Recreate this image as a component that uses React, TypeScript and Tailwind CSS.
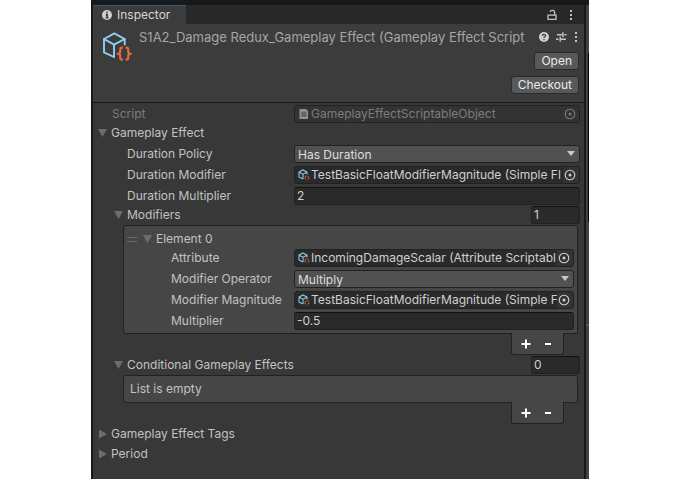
import { useId } from "react";
import type { ReactNode } from "react";

function AssetIcon({ className }: { className: string }) {
  return (
    <svg viewBox="0 0 30 30" className={className} fill="none" aria-hidden="true">
      <g stroke="#8fd0f2" strokeWidth="1.9" strokeLinejoin="round" strokeLinecap="round">
        <path d="M12 26 L2 21.3 V8 L12.3 2.4 L22.7 8 V13.5" />
        <path d="M2 8 L12 13.6 L22.7 8 M12 13.6 V26" />
      </g>
      <g stroke="#e8683c" strokeWidth="2.1" strokeLinejoin="round">
        <path d="M20.8 16.6 H20 Q18.2 16.6 18.2 18.4 V20.4 Q18.2 22.6 15.6 22.8 Q18.2 23 18.2 25.2 V26.8 Q18.2 28.6 20 28.6 H20.8" />
        <path d="M23.6 16.6 H24.4 Q26.2 16.6 26.2 18.4 V20.4 Q26.2 22.6 28.8 22.8 Q26.2 23 26.2 25.2 V26.8 Q26.2 28.6 24.4 28.6 H23.6" />
      </g>
    </svg>
  );
}

function SmallAssetIcon() {
  return (
    <svg viewBox="0 0 12 12" className="h-3 w-3 shrink-0" fill="none" aria-hidden="true">
      <path d="M4.8 10 L1 8 V3.2 L5 1 L9 3.2 V5.5 M1 3.2 L5 5.2 L9 3.2 M5 5.2 V10" stroke="#8cc4e0" strokeWidth="1.1" />
      <path d="M8 6.8 L6.8 8.9 L8 11 M9.6 6.8 L11 8.9 L9.6 11" stroke="#d0694a" strokeWidth="1.1" strokeDasharray="1.5 .8" />
    </svg>
  );
}

function ScriptIcon() {
  return (
    <svg viewBox="0 0 12 12" className="h-3 w-3 shrink-0" aria-hidden="true">
      <path d="M1.5 1 H8 L10 3 V11 H1.5 Z" fill="#8d908e" />
      <path d="M4.6 3.5 V9 M7 3.5 V9 M3.2 5.2 H8.4 M3.2 7.4 H8.4" stroke="#4c6156" strokeWidth="1.2" />
    </svg>
  );
}

function Kebab() {
  return (
    <svg viewBox="0 0 4 12" className="h-3 w-1" fill="#c4c4c4" aria-hidden="true">
      <rect x="1" y="1" width="2" height="2" />
      <rect x="1" y="5" width="2" height="2" />
      <rect x="1" y="9" width="2" height="2" />
    </svg>
  );
}

function Triangle({ open }: { open: boolean }) {
  return (
    <svg viewBox="0 0 10 10" className="h-[10px] w-[10px] shrink-0" fill="#6c6c6c" aria-hidden="true">
      <path d={open ? "M0 1 H9 L4.5 9 Z" : "M1 .5 V9.5 L9 5 Z"} />
    </svg>
  );
}

function Foldout({ label, open = false }: { label: string; open?: boolean }) {
  return (
    <button type="button" aria-expanded={open} className="flex h-[18px] items-center gap-[3px] text-left">
      <Triangle open={open} />
      <span>{label}</span>
    </button>
  );
}

const box = "h-[18px] w-full min-w-0 rounded-[3px] border border-[#212121]";

function Row({ label, id, nested = false, children }: { label: string; id: string; nested?: boolean; children: ReactNode }) {
  return (
    <div className="flex h-[18px] items-center">
      <label htmlFor={id} className={nested ? "w-[123px] shrink-0" : "w-[167px] shrink-0"}>
        {label}
      </label>
      <div className="min-w-0 flex-1">{children}</div>
    </div>
  );
}

function ObjectField({ id, value, disabled = false }: { id: string; value: string; disabled?: boolean }) {
  return (
    <div className={`flex items-center ${box} ${disabled ? "bg-[#333] text-[#7c7c7c]" : "bg-[#2a2a2a] text-[#d0d0d0]"}`}>
      <div className="flex min-w-0 flex-1 items-center gap-px pl-[3px] whitespace-nowrap">
        {disabled ? <ScriptIcon /> : <SmallAssetIcon />}
        <span>{value}</span>
      </div>
      <button
        id={id}
        type="button"
        disabled={disabled}
        aria-label={`Select ${value}`}
        className={`flex h-4 w-4 shrink-0 items-center justify-end rounded-r-[2px] pr-[3px] ${disabled ? "" : "bg-[#333]"}`}
      >
        <svg viewBox="0 0 12 12" className="h-3 w-3 shrink-0" fill="none" stroke="currentColor" aria-hidden="true">
          <circle cx="6" cy="6" r="4.8" strokeWidth="1.1" />
          <circle cx="6" cy="6" r="1.5" fill="currentColor" stroke="none" />
        </svg>
      </button>
    </div>
  );
}

function SelectField({ id, value }: { id: string; value: string }) {
  return (
    <div className="relative">
      <select id={id} className={`block appearance-none bg-[#515151] pl-[3px] text-[#dedede] ${box}`}>
        <option>{value}</option>
      </select>
      <svg viewBox="0 0 8 5" className="pointer-events-none absolute top-[6px] right-[5px] h-[5px] w-2" fill="#c8c8c8" aria-hidden="true">
        <path d="M0 0 H8 L4 5 Z" />
      </svg>
    </div>
  );
}

function TextField({ id, value, label }: { id?: string; value: string; label?: string }) {
  return (
    <input
      id={id}
      aria-label={label}
      defaultValue={value}
      className={`block border-t-[#111] bg-[#2a2a2a] px-[2px] text-[#d0d0d0] ${box}`}
    />
  );
}

function ListFooter() {
  return (
    <div className="mr-4 -mt-px flex h-[22px] w-[53px] items-center justify-center gap-3 self-end rounded-b-[3px] border border-t-0 border-[#212121] bg-[#464646] pr-[2px] text-white">
      <button type="button" aria-label="Add element">
        <svg viewBox="0 0 10 10" className="h-[10px] w-[10px]" stroke="currentColor" strokeWidth="2" aria-hidden="true">
          <path d="M5 .5 V9.5 M.5 5 H9.5" />
        </svg>
      </button>
      <button type="button" aria-label="Remove element">
        <svg viewBox="0 0 10 10" className="h-[10px] w-[10px]" stroke="currentColor" strokeWidth="2" aria-hidden="true">
          <path d="M2 5 H8" />
        </svg>
      </button>
    </div>
  );
}

function ListHeader({ label, count }: { label: string; count: string }) {
  return (
    <div className="flex items-center justify-between pl-4">
      <Foldout label={label} open />
      <div className="w-[49px]">
        <TextField value={count} label={`${label} size`} />
      </div>
    </div>
  );
}

const listBox = "ml-[25px] mr-[2px] rounded-[3px] border border-[#212121] bg-[#464646]";
const headerButton = "h-[18px] rounded-[3px] border border-[#2b2b2b] bg-[#585858] px-[6px] leading-4 text-[#eaeaea]";

export default function App() {
  const uid = useId();
  return (
    <div className="flex min-h-screen bg-white px-[91px] font-['Inter','Liberation_Sans',sans-serif] text-[12px] leading-[18px] text-[#c2c2c2]">
      <main className="flex min-w-0 flex-1 flex-col border-x-2 border-t-[5px] border-[#191919] bg-[#383838]">
        <div className="flex h-[19px] items-stretch justify-between bg-[#282828]">
          <div className="flex w-[93px] items-center gap-[5px] border-t border-[#2c5d87] bg-[#3c3c3c] pl-[9px] text-[#d6d6d6]">
            <svg viewBox="0 0 10 10" className="h-[10px] w-[10px]" aria-hidden="true">
              <circle cx="5" cy="5" r="5" fill="#d0d0d0" />
              <path d="M5 1.6 V3.2 M3.8 4.4 H5.3 V7.8 M3.6 7.9 H6.6" stroke="#383838" strokeWidth="1.3" />
            </svg>
            <span>Inspector</span>
          </div>
          <div className="flex items-center gap-3 pr-[11px]">
            <button type="button" aria-label="Lock">
              <svg viewBox="0 0 10 12" className="h-3 w-[10px]" fill="none" stroke="#c4c4c4" strokeWidth="1.3" aria-hidden="true">
                <path d="M1 6.2 H9 V10.4 H1 Z M7.6 6 V3.4 Q7.6 1.4 5.6 1.4 H5 Q3.4 1.4 3.2 3" />
              </svg>
            </button>
            <button type="button" aria-label="Tab menu">
              <Kebab />
            </button>
          </div>
        </div>

        <header className="flex h-[79px] shrink-0 border-b border-[#191919] bg-[#3c3c3c] pt-1 pl-[9px]">
          <AssetIcon className="mt-[3px] h-[30px] w-[30px] shrink-0" />
          <div className="ml-[7px] flex min-w-0 flex-1 flex-col items-end pr-[5px]">
            <div className="flex w-full items-center">
              <h1 className="min-w-0 flex-1 text-[13px] whitespace-nowrap text-[#a6a6a6]">
                S1A2_Damage Redux_Gameplay Effect (Gameplay Effect Script
              </h1>
              <div className="flex items-center gap-[7px] pr-px">
                <button type="button" aria-label="Help">
                  <svg viewBox="0 0 10 10" className="h-[10px] w-[10px]" aria-hidden="true">
                    <circle cx="5" cy="5" r="5" fill="#cfcfcf" />
                    <path d="M3.4 3.9 Q3.4 2.3 5 2.3 Q6.6 2.3 6.6 3.8 Q6.6 4.6 5 5.4 V6.1 M5 6.9 V8.2" stroke="#3c3c3c" strokeWidth="1.2" fill="none" />
                  </svg>
                </button>
                <button type="button" aria-label="Presets">
                  <svg viewBox="0 0 11 10" className="h-[10px] w-[11px]" stroke="#c4c4c4" strokeWidth="1.4" aria-hidden="true">
                    <path d="M1 2.8 H7 M7 .3 V5.3 M8.5 2.8 H10.5 M0 7.2 H2.5 M4.2 4.7 V9.7 M4.2 7.2 H10" />
                  </svg>
                </button>
                <button type="button" aria-label="Component menu">
                  <Kebab />
                </button>
              </div>
            </div>
            <button type="button" className={`mt-[6px] ${headerButton}`}>
              Open
            </button>
            <button type="button" className={`mt-[6px] ${headerButton}`}>
              Checkout
            </button>
          </div>
        </header>

        <section className="flex flex-col pt-[2px] pr-1 pl-[5px]">
          <div className="flex h-[18px] items-center pl-[14px] text-[#7c7c7c]">
            <label htmlFor={`${uid}s`} className="w-[182px] shrink-0">
              Script
            </label>
            <ObjectField id={`${uid}s`} value="GameplayEffectScriptableObject" disabled />
          </div>
          <div className="mt-px flex">
            <Foldout label="Gameplay Effect" open />
          </div>
          <div className="mt-[3px] flex flex-col gap-[3px] pl-[29px]">
            <Row label="Duration Policy" id={`${uid}p`}>
              <SelectField id={`${uid}p`} value="Has Duration" />
            </Row>
            <Row label="Duration Modifier" id={`${uid}m`}>
              <ObjectField id={`${uid}m`} value="TestBasicFloatModifierMagnitude (Simple Fl" />
            </Row>
            <Row label="Duration Multiplier" id={`${uid}x`}>
              <TextField id={`${uid}x`} value="2" />
            </Row>
          </div>
          <div className="mt-px flex flex-col">
            <ListHeader label="Modifiers" count="1" />
            <div className={`mt-px flex flex-col rounded-br-none pt-1 pr-[3px] pb-[3px] ${listBox}`}>
              <div className="flex items-center gap-[6px] pl-[3px]">
                <svg viewBox="0 0 10 5" className="h-[5px] w-[10px]" stroke="#6a6a6a" aria-hidden="true">
                  <path d="M0 .5 H10 M0 4.5 H10" />
                </svg>
                <Foldout label="Element 0" open />
              </div>
              <div className="mt-px flex flex-col gap-[3px] pl-[47px]">
                <Row nested label="Attribute" id={`${uid}a`}>
                  <ObjectField id={`${uid}a`} value="IncomingDamageScalar (Attribute Scriptabl" />
                </Row>
                <Row nested label="Modifier Operator" id={`${uid}o`}>
                  <SelectField id={`${uid}o`} value="Multiply" />
                </Row>
                <Row nested label="Modifier Magnitude" id={`${uid}g`}>
                  <ObjectField id={`${uid}g`} value="TestBasicFloatModifierMagnitude (Simple F" />
                </Row>
                <Row nested label="Multiplier" id={`${uid}u`}>
                  <TextField id={`${uid}u`} value="-0.5" />
                </Row>
              </div>
            </div>
            <ListFooter />
          </div>
          <div className="mt-px flex flex-col">
            <ListHeader label="Conditional Gameplay Effects" count="0" />
            <div className={`mt-px flex h-7 items-center pl-[6px] ${listBox}`}>List is empty</div>
            <ListFooter />
          </div>
          <div className="mt-px flex flex-col items-start gap-[2px]">
            <Foldout label="Gameplay Effect Tags" />
            <Foldout label="Period" />
          </div>
        </section>
      </main>
      <aside className="flex w-[3px] flex-col items-end border-t-[5px] border-[#191919] bg-[#424242]">
        <div className="mt-12 h-[169px] w-px bg-black" />
        <div className="mt-[102px] h-[2px] w-full bg-[#5a5a5a]" />
      </aside>
    </div>
  );
}
